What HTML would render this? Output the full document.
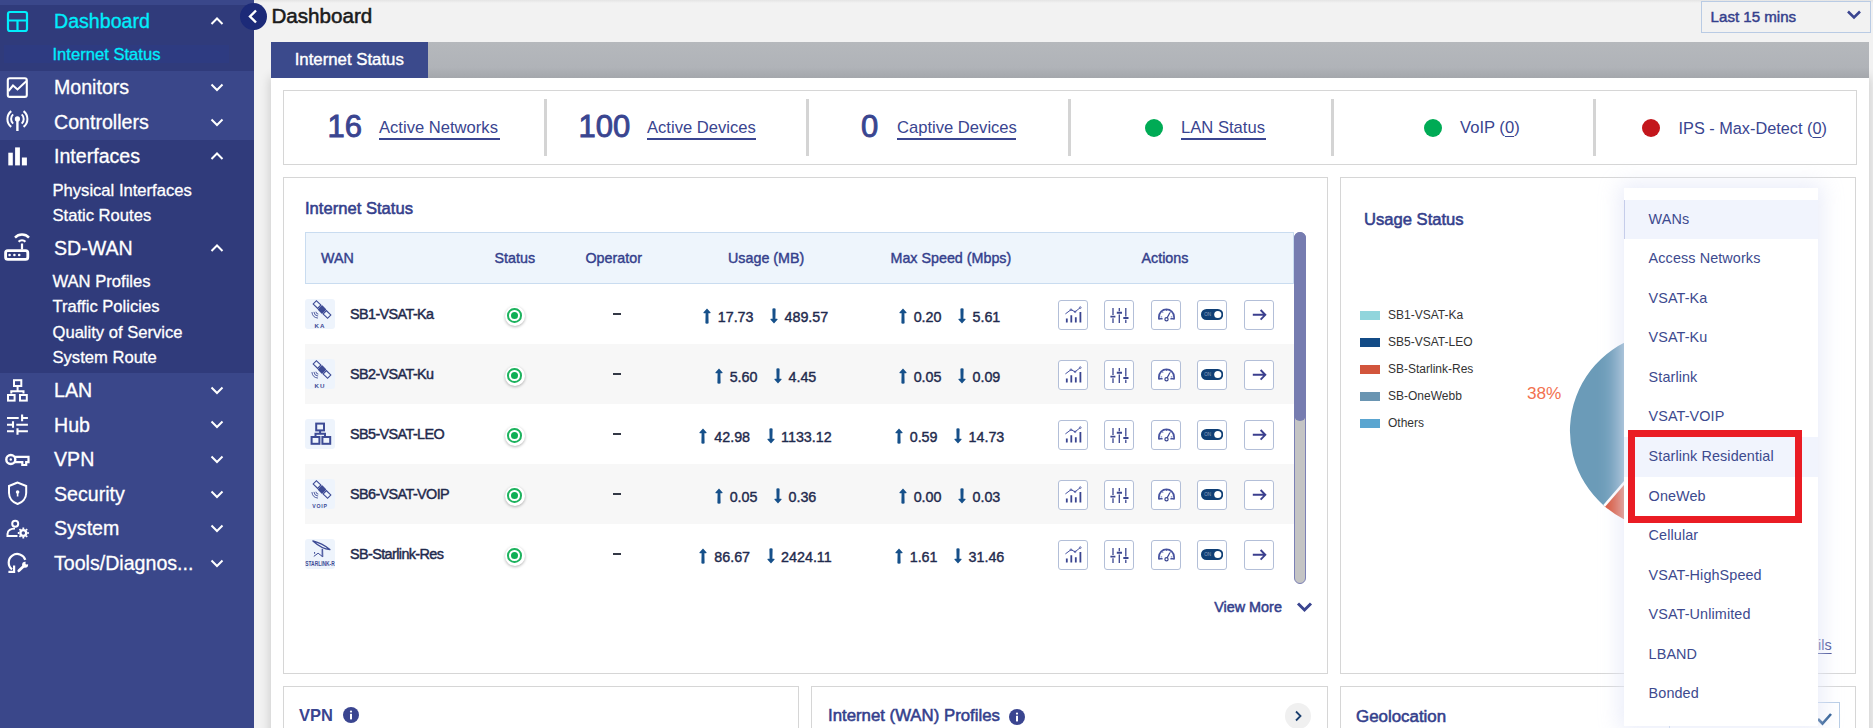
<!DOCTYPE html>
<html><head><meta charset="utf-8">
<style>
*{box-sizing:border-box;margin:0;padding:0}
html,body{width:1873px;height:728px;overflow:hidden;background:#f2f2f2;font-family:"Liberation Sans",sans-serif;position:relative}
.a{position:absolute}
.t{position:absolute;white-space:nowrap;line-height:1}
u{text-decoration-thickness:1px;text-underline-offset:3px}
</style></head><body>
<div class="a" style="left:0px;top:0px;width:254px;height:728px;background:#3a478a"></div>
<div class="a" style="left:0px;top:5px;width:254px;height:66px;background:#303b7b"></div>
<div class="a" style="left:4px;top:45px;width:225px;height:18px;background:#2e3b81"></div>
<div class="a" style="left:0px;top:140px;width:254px;height:233px;background:#303b7b"></div>
<div class="t" style="left:54.0px;top:12.41px;font-size:19.6px;color:#00eefc;font-weight:400;-webkit-text-stroke:0.3px #00eefc">Dashboard</div>
<svg class="a" style="left:210px;top:16.2px" width="14" height="10" viewBox="0 0 14 10"><path d="M1.5 8 L7 2.5 L12.5 8" fill="none" stroke="#fff" stroke-width="2"/></svg>
<div class="t" style="left:54.0px;top:78.21px;font-size:19.6px;color:#ffffff;font-weight:400;-webkit-text-stroke:0.3px #ffffff">Monitors</div>
<svg class="a" style="left:210px;top:82.0px" width="14" height="10" viewBox="0 0 14 10"><path d="M1.5 2.5 L7 8 L12.5 2.5" fill="none" stroke="#fff" stroke-width="2"/></svg>
<div class="t" style="left:54.0px;top:112.81px;font-size:19.6px;color:#ffffff;font-weight:400;-webkit-text-stroke:0.3px #ffffff">Controllers</div>
<svg class="a" style="left:210px;top:116.6px" width="14" height="10" viewBox="0 0 14 10"><path d="M1.5 2.5 L7 8 L12.5 2.5" fill="none" stroke="#fff" stroke-width="2"/></svg>
<div class="t" style="left:54.0px;top:147.41px;font-size:19.6px;color:#ffffff;font-weight:400;-webkit-text-stroke:0.3px #ffffff">Interfaces</div>
<svg class="a" style="left:210px;top:151.2px" width="14" height="10" viewBox="0 0 14 10"><path d="M1.5 8 L7 2.5 L12.5 8" fill="none" stroke="#fff" stroke-width="2"/></svg>
<div class="t" style="left:54.0px;top:239.21px;font-size:19.6px;color:#ffffff;font-weight:400;-webkit-text-stroke:0.3px #ffffff">SD-WAN</div>
<svg class="a" style="left:210px;top:243.0px" width="14" height="10" viewBox="0 0 14 10"><path d="M1.5 8 L7 2.5 L12.5 8" fill="none" stroke="#fff" stroke-width="2"/></svg>
<div class="t" style="left:54.0px;top:380.81px;font-size:19.6px;color:#ffffff;font-weight:400;-webkit-text-stroke:0.3px #ffffff">LAN</div>
<svg class="a" style="left:210px;top:384.6px" width="14" height="10" viewBox="0 0 14 10"><path d="M1.5 2.5 L7 8 L12.5 2.5" fill="none" stroke="#fff" stroke-width="2"/></svg>
<div class="t" style="left:54.0px;top:415.61px;font-size:19.6px;color:#ffffff;font-weight:400;-webkit-text-stroke:0.3px #ffffff">Hub</div>
<svg class="a" style="left:210px;top:419.4px" width="14" height="10" viewBox="0 0 14 10"><path d="M1.5 2.5 L7 8 L12.5 2.5" fill="none" stroke="#fff" stroke-width="2"/></svg>
<div class="t" style="left:54.0px;top:450.01px;font-size:19.6px;color:#ffffff;font-weight:400;-webkit-text-stroke:0.3px #ffffff">VPN</div>
<svg class="a" style="left:210px;top:453.8px" width="14" height="10" viewBox="0 0 14 10"><path d="M1.5 2.5 L7 8 L12.5 2.5" fill="none" stroke="#fff" stroke-width="2"/></svg>
<div class="t" style="left:54.0px;top:484.81px;font-size:19.6px;color:#ffffff;font-weight:400;-webkit-text-stroke:0.3px #ffffff">Security</div>
<svg class="a" style="left:210px;top:488.6px" width="14" height="10" viewBox="0 0 14 10"><path d="M1.5 2.5 L7 8 L12.5 2.5" fill="none" stroke="#fff" stroke-width="2"/></svg>
<div class="t" style="left:54.0px;top:519.01px;font-size:19.6px;color:#ffffff;font-weight:400;-webkit-text-stroke:0.3px #ffffff">System</div>
<svg class="a" style="left:210px;top:522.8px" width="14" height="10" viewBox="0 0 14 10"><path d="M1.5 2.5 L7 8 L12.5 2.5" fill="none" stroke="#fff" stroke-width="2"/></svg>
<div class="t" style="left:54.0px;top:553.71px;font-size:19.6px;color:#ffffff;font-weight:400;-webkit-text-stroke:0.3px #ffffff">Tools/Diagnos...</div>
<svg class="a" style="left:210px;top:557.5px" width="14" height="10" viewBox="0 0 14 10"><path d="M1.5 2.5 L7 8 L12.5 2.5" fill="none" stroke="#fff" stroke-width="2"/></svg>
<div class="t" style="left:52.5px;top:46.95px;font-size:16.6px;color:#00eefc;font-weight:400;-webkit-text-stroke:0.3px #00eefc">Internet Status</div>
<div class="t" style="left:52.5px;top:182.95px;font-size:16.6px;color:#ffffff;font-weight:400;-webkit-text-stroke:0.3px #ffffff">Physical Interfaces</div>
<div class="t" style="left:52.5px;top:208.05px;font-size:16.6px;color:#ffffff;font-weight:400;-webkit-text-stroke:0.3px #ffffff">Static Routes</div>
<div class="t" style="left:52.5px;top:273.55px;font-size:16.6px;color:#ffffff;font-weight:400;-webkit-text-stroke:0.3px #ffffff">WAN Profiles</div>
<div class="t" style="left:52.5px;top:298.75px;font-size:16.6px;color:#ffffff;font-weight:400;-webkit-text-stroke:0.3px #ffffff">Traffic Policies</div>
<div class="t" style="left:52.5px;top:324.75px;font-size:16.6px;color:#ffffff;font-weight:400;-webkit-text-stroke:0.3px #ffffff">Quality of Service</div>
<div class="t" style="left:52.5px;top:350.15px;font-size:16.6px;color:#ffffff;font-weight:400;-webkit-text-stroke:0.3px #ffffff">System Route</div>
<svg class="a" style="left:0;top:0" width="40" height="600" viewBox="0 0 40 600">
<rect x="8" y="12" width="19" height="19" rx="2" fill="none" stroke="#00eefc" stroke-width="2.2"/><path d="M8 20.5H27M17.5 20.5V31" stroke="#00eefc" stroke-width="2.2"/>
<rect x="7.8" y="78.2" width="19" height="18.7" rx="2" fill="none" stroke="#fff" stroke-width="2.1"/><path d="M8.5 91 L13 85.5 L17.5 89.5 L26.5 81" fill="none" stroke="#fff" stroke-width="2"/>
<circle cx="17.4" cy="118.9" r="2.6" fill="#fff"/><path d="M17.4 119 V131" stroke="#fff" stroke-width="2.4"/>
<path d="M13.10 114.39 A6.3 6.3 0 0 0 13.10 123.61 M21.70 114.39 A6.3 6.3 0 0 1 21.70 123.61 M11.24 111.12 A10 10 0 0 0 11.24 126.88 M23.56 111.12 A10 10 0 0 1 23.56 126.88" fill="none" stroke="#fff" stroke-width="2"/>
<rect x="8.3" y="152.7" width="4.5" height="12.7" fill="#fff"/><rect x="15.1" y="147.4" width="4.8" height="18" fill="#fff"/><rect x="21.9" y="157.5" width="5" height="7.9" fill="#fff"/>
<rect x="5.6" y="250.6" width="22.2" height="8.8" rx="2.2" fill="none" stroke="#fff" stroke-width="2.8"/>
<circle cx="9.6" cy="255" r="1.3" fill="#fff"/><circle cx="14.4" cy="255" r="1.3" fill="#fff"/><circle cx="19.2" cy="255" r="1.3" fill="#fff"/>
<path d="M22 243.5 V249.5" stroke="#fff" stroke-width="2.2"/>
<path d="M18.6 241.8 A4.5 4.5 0 0 1 25.4 241.8" fill="none" stroke="#fff" stroke-width="2.2"/>
<path d="M15 237.6 A9.5 9.5 0 0 1 29 237.6" fill="none" stroke="#fff" stroke-width="2.4"/>
<rect x="14" y="380.2" width="7.3" height="5.8" fill="none" stroke="#fff" stroke-width="2"/>
<path d="M17.6 386 V391.2 M11.3 393.5 V391.2 H23.5 V393.5" fill="none" stroke="#fff" stroke-width="2"/>
<rect x="8" y="395" width="6.6" height="5.6" fill="none" stroke="#fff" stroke-width="2"/><rect x="20" y="395" width="6.8" height="5.6" fill="none" stroke="#fff" stroke-width="2"/>
<path d="M7 418 H18.7 M22.1 418 H27.9 M7 424.7 H13 M16.3 424.7 H27.9 M7 431.3 H13.9 M17.5 431.3 H27.9" stroke="#fff" stroke-width="2"/>
<path d="M22.1 414.4 V421.2 M13 421.2 V427.8 M17.5 428.2 V434.8" stroke="#fff" stroke-width="2.1"/>
<circle cx="10.8" cy="459.5" r="4.5" fill="none" stroke="#fff" stroke-width="2.4"/><circle cx="10.8" cy="459.5" r="1.2" fill="#fff"/>
<path d="M15 456.8 H28.5 V462.2 H26.2 V465 H22.3 V462.2 H15" fill="none" stroke="#fff" stroke-width="2.2"/>
<path d="M17.6 482.5 L9 486 V493 C9 498.5 13 502.5 17.6 504 C22.2 502.5 26.2 498.5 26.2 493 V486 Z" fill="none" stroke="#fff" stroke-width="2"/>
<circle cx="17.6" cy="492" r="1.8" fill="#fff"/><path d="M17.6 492 V496.5" stroke="#fff" stroke-width="1.6"/>
<circle cx="15.2" cy="523.8" r="3" fill="none" stroke="#fff" stroke-width="2"/>
<path d="M17.5 536 H7.5 V534 C7.5 530.5 11 528.5 15 528.5" fill="none" stroke="#fff" stroke-width="2"/>
<circle cx="23.3" cy="533" r="2.9" fill="none" stroke="#fff" stroke-width="2.3"/>
<path d="M23.3 527.5 V529 M23.3 537 V538.5 M17.8 533 H19.3 M27.3 533 H28.8 M19.4 529.1 L20.5 530.2 M26.1 535.8 L27.2 536.9 M19.4 536.9 L20.5 535.8 M26.1 530.2 L27.2 529.1" stroke="#fff" stroke-width="1.8"/>
<path d="M25.3 559.9 A8.5 8.5 0 1 0 12.1 569.3" fill="none" stroke="#fff" stroke-width="2.2"/>
<path d="M14.1 565.6 V571.9 H8.4" fill="none" stroke="#fff" stroke-width="2.2"/>
<path d="M18.8 570.8 L23.6 566.2" stroke="#fff" stroke-width="2.8" stroke-linecap="round"/><circle cx="25.1" cy="564.8" r="3" fill="#fff"/><circle cx="26.9" cy="563" r="1.5" fill="#3a478a"/>
</svg>
<div class="a" style="left:254px;top:0px;width:1619px;height:3px;background:linear-gradient(#e4e4e4,#f2f2f2)"></div>
<div class="a" style="left:240px;top:3px;width:27px;height:27px;border-radius:50%;background:#1c2a78"></div>
<svg class="a" style="left:245px;top:8px" width="16" height="17" viewBox="0 0 16 17"><path d="M11 2.5 L5 8.5 L11 14.5" fill="none" stroke="#fff" stroke-width="2.4"/></svg>
<div class="t" style="left:271.5px;top:6.16px;font-size:20.6px;color:#1b1b1b;font-weight:400;-webkit-text-stroke:0.55px #1b1b1b">Dashboard</div>
<div class="a" style="left:1701px;top:1px;width:170px;height:32px;border:1px solid #b9cbe4;background:#f2f2f2"></div>
<div class="t" style="left:1710.6px;top:9.12px;font-size:15.1px;color:#34408c;font-weight:400;-webkit-text-stroke:0.45px #34408c">Last 15 mins</div>
<svg class="a" style="left:1846px;top:9px" width="16" height="12" viewBox="0 0 16 12"><path d="M2 2.5 L8 8.5 L14 2.5" fill="none" stroke="#3a4590" stroke-width="2.6"/></svg>
<div class="a" style="left:271px;top:78px;width:1598px;height:700px;box-shadow:0 0 10px 1px rgba(0,0,0,0.16)"></div>
<div class="a" style="left:271px;top:78px;width:1598px;height:650px;background:#fff"></div>
<div class="a" style="left:271px;top:42px;width:1598px;height:36px;background:linear-gradient(#b5b8bc 0%,#b0b3b8 70%,#a4a7ac 100%)"></div>
<div class="a" style="left:271px;top:42px;width:157px;height:36px;background:#3b4a8c"></div>
<div class="t" style="left:294.7px;top:51.78px;font-size:16.8px;color:#ffffff;font-weight:400;-webkit-text-stroke:0.4px #fff">Internet Status</div>
<div class="a" style="left:283px;top:90px;width:1574px;height:75px;border:1px solid #d6d6d6;background:#fff"></div>
<div class="a" style="left:544px;top:99px;width:3px;height:57px;background:#d4d4d4"></div>
<div class="a" style="left:806px;top:99px;width:3px;height:57px;background:#d4d4d4"></div>
<div class="a" style="left:1068px;top:99px;width:3px;height:57px;background:#d4d4d4"></div>
<div class="a" style="left:1331px;top:99px;width:3px;height:57px;background:#d4d4d4"></div>
<div class="a" style="left:1593px;top:99px;width:3px;height:57px;background:#d4d4d4"></div>
<div class="t" style="left:327.5px;top:110.56px;font-size:31px;color:#3a4590;font-weight:400;-webkit-text-stroke:0.9px #3a4590">16</div>
<div class="t" style="left:578.5px;top:110.56px;font-size:31px;color:#3a4590;font-weight:400;-webkit-text-stroke:0.9px #3a4590">100</div>
<div class="t" style="left:861.0px;top:110.56px;font-size:31px;color:#3a4590;font-weight:400;-webkit-text-stroke:0.9px #3a4590">0</div>
<div class="t" style="left:379.0px;top:119.65px;font-size:16.6px;color:#3a4590;font-weight:400;">Active Networks</div>
<div class="a" style="left:379px;top:138.2px;width:121px;height:2px;background:#3a4590"></div>
<div class="t" style="left:647.0px;top:119.65px;font-size:16.6px;color:#3a4590;font-weight:400;">Active Devices</div>
<div class="a" style="left:647px;top:138.2px;width:108.5px;height:2px;background:#3a4590"></div>
<div class="t" style="left:897.0px;top:119.65px;font-size:16.6px;color:#3a4590;font-weight:400;">Captive Devices</div>
<div class="a" style="left:897px;top:138.2px;width:118.5px;height:2px;background:#3a4590"></div>
<div class="t" style="left:1181.0px;top:119.65px;font-size:16.6px;color:#3a4590;font-weight:400;">LAN Status</div>
<div class="a" style="left:1181px;top:138.2px;width:84.5px;height:2px;background:#3a4590"></div>
<div class="a" style="left:1145px;top:119px;width:18px;height:18px;border-radius:50%;background:#00ab55"></div>
<div class="a" style="left:1424px;top:119px;width:18px;height:18px;border-radius:50%;background:#00ab55"></div>
<div class="a" style="left:1642px;top:119px;width:18px;height:18px;border-radius:50%;background:#c3161c"></div>
<div class="t" style="left:1460.0px;top:120.15px;font-size:16.6px;color:#3a4590;font-weight:400;">VoIP (<u>0</u>)</div>
<div class="t" style="left:1678.5px;top:120.40px;font-size:16.3px;color:#3a4590;font-weight:400;">IPS - Max-Detect (<u>0</u>)</div>
<div class="a" style="left:283px;top:177px;width:1045px;height:497px;border:1px solid #d6d6d6;background:#fff"></div>
<div class="t" style="left:305.0px;top:201.25px;font-size:16.6px;color:#34408c;font-weight:400;-webkit-text-stroke:0.55px #34408c">Internet Status</div>
<div class="a" style="left:305px;top:232px;width:989px;height:52px;background:#eef5fc;border:1px solid #c9dcf0"></div>
<div class="t" style="left:321.0px;top:251.30px;font-size:14.3px;color:#34408c;font-weight:400;-webkit-text-stroke:0.4px #34408c">WAN</div>
<div class="t" style="left:494.5px;top:251.30px;font-size:14.3px;color:#34408c;font-weight:400;-webkit-text-stroke:0.4px #34408c">Status</div>
<div class="t" style="left:585.5px;top:251.30px;font-size:14.3px;color:#34408c;font-weight:400;-webkit-text-stroke:0.4px #34408c">Operator</div>
<div class="t" style="left:728.0px;top:251.30px;font-size:14.3px;color:#34408c;font-weight:400;-webkit-text-stroke:0.4px #34408c">Usage (MB)</div>
<div class="t" style="left:890.5px;top:251.30px;font-size:14.3px;color:#34408c;font-weight:400;-webkit-text-stroke:0.4px #34408c">Max Speed (Mbps)</div>
<div class="t" style="left:1141.5px;top:251.30px;font-size:14.3px;color:#34408c;font-weight:400;-webkit-text-stroke:0.4px #34408c">Actions</div>
<div class="a" style="left:305px;top:299px;width:30px;height:30px;background:#eef4fc;border-radius:3px"></div>
<svg class="a" style="left:305px;top:299px" width="30" height="30" viewBox="0 0 30 30"><g transform="rotate(-45 17 10.5)"><rect x="13.8" y="7.3" width="6.4" height="6.4" rx="0.8" fill="#3d4b95"/><rect x="14.7" y="0.3" width="4.6" height="6.3" fill="none" stroke="#3d4b95" stroke-width="1.1"/><rect x="14.7" y="14.4" width="4.6" height="6.3" fill="none" stroke="#3d4b95" stroke-width="1.1"/></g>
<path d="M13.27 15.09 A2.6 2.6 0 0 1 10.91 12.73 M13.10 17.08 A4.6 4.6 0 0 1 8.92 12.90 M12.92 19.07 A6.6 6.6 0 0 1 6.93 13.08" fill="none" stroke="#3d4b95" stroke-width="0.9"/><text x="15" y="28.8" text-anchor="middle" font-family="Liberation Sans" font-weight="700" font-size="6.2" letter-spacing="1.0" fill="#3d4b95">KA</text></svg>
<div class="t" style="left:350.0px;top:307.01px;font-size:14.4px;color:#1f2a4d;font-weight:400;-webkit-text-stroke:0.45px #1f2a4d;letter-spacing:-0.6px">SB1-VSAT-Ka</div>
<div class="a" style="left:504.5px;top:305.5px;width:20px;height:20px;border-radius:50%;background:#fff;box-shadow:0 1px 3px rgba(0,0,0,0.30)"></div>
<div class="a" style="left:507.2px;top:308.2px;width:14.6px;height:14.6px;border-radius:50%;border:2.3px solid #1db35e"></div>
<div class="a" style="left:510.8px;top:311.8px;width:7.4px;height:7.4px;border-radius:50%;background:#0fae55"></div>
<div class="a" style="left:613px;top:313.2px;width:8.2px;height:1.4px;background:#333845"></div>
<div class="a" style="left:305px;top:344px;width:989px;height:60px;background:#f7f7f7"></div>
<div class="a" style="left:305px;top:359px;width:30px;height:30px;background:#eef4fc;border-radius:3px"></div>
<svg class="a" style="left:305px;top:359px" width="30" height="30" viewBox="0 0 30 30"><g transform="rotate(-45 17 10.5)"><rect x="13.8" y="7.3" width="6.4" height="6.4" rx="0.8" fill="#3d4b95"/><rect x="14.7" y="0.3" width="4.6" height="6.3" fill="none" stroke="#3d4b95" stroke-width="1.1"/><rect x="14.7" y="14.4" width="4.6" height="6.3" fill="none" stroke="#3d4b95" stroke-width="1.1"/></g>
<path d="M13.27 15.09 A2.6 2.6 0 0 1 10.91 12.73 M13.10 17.08 A4.6 4.6 0 0 1 8.92 12.90 M12.92 19.07 A6.6 6.6 0 0 1 6.93 13.08" fill="none" stroke="#3d4b95" stroke-width="0.9"/><text x="15" y="28.8" text-anchor="middle" font-family="Liberation Sans" font-weight="700" font-size="6.2" letter-spacing="1.0" fill="#3d4b95">KU</text></svg>
<div class="t" style="left:350.0px;top:367.01px;font-size:14.4px;color:#1f2a4d;font-weight:400;-webkit-text-stroke:0.45px #1f2a4d;letter-spacing:-0.6px">SB2-VSAT-Ku</div>
<div class="a" style="left:504.5px;top:365.5px;width:20px;height:20px;border-radius:50%;background:#fff;box-shadow:0 1px 3px rgba(0,0,0,0.30)"></div>
<div class="a" style="left:507.2px;top:368.2px;width:14.6px;height:14.6px;border-radius:50%;border:2.3px solid #1db35e"></div>
<div class="a" style="left:510.8px;top:371.8px;width:7.4px;height:7.4px;border-radius:50%;background:#0fae55"></div>
<div class="a" style="left:613px;top:373.2px;width:8.2px;height:1.4px;background:#333845"></div>
<div class="a" style="left:305px;top:419px;width:30px;height:30px;background:#eef4fc;border-radius:3px"></div>
<svg class="a" style="left:305px;top:419px" width="30" height="30" viewBox="0 0 30 30"><rect x="11.2" y="4.6" width="7.8" height="6.8" fill="none" stroke="#3d4b95" stroke-width="2"/><path d="M15.1 11.4 V14.8 M10.5 18 V14.8 H20 V18" fill="none" stroke="#3d4b95" stroke-width="2"/><rect x="6.6" y="18" width="7.8" height="6.8" fill="none" stroke="#3d4b95" stroke-width="2"/><rect x="17.4" y="18" width="7.8" height="6.8" fill="none" stroke="#3d4b95" stroke-width="2"/></svg>
<div class="t" style="left:350.0px;top:427.01px;font-size:14.4px;color:#1f2a4d;font-weight:400;-webkit-text-stroke:0.45px #1f2a4d;letter-spacing:-0.6px">SB5-VSAT-LEO</div>
<div class="a" style="left:504.5px;top:425.5px;width:20px;height:20px;border-radius:50%;background:#fff;box-shadow:0 1px 3px rgba(0,0,0,0.30)"></div>
<div class="a" style="left:507.2px;top:428.2px;width:14.6px;height:14.6px;border-radius:50%;border:2.3px solid #1db35e"></div>
<div class="a" style="left:510.8px;top:431.8px;width:7.4px;height:7.4px;border-radius:50%;background:#0fae55"></div>
<div class="a" style="left:613px;top:433.2px;width:8.2px;height:1.4px;background:#333845"></div>
<div class="a" style="left:305px;top:464px;width:989px;height:60px;background:#f7f7f7"></div>
<div class="a" style="left:305px;top:479px;width:30px;height:30px;background:#eef4fc;border-radius:3px"></div>
<svg class="a" style="left:305px;top:479px" width="30" height="30" viewBox="0 0 30 30"><g transform="rotate(-45 17 10.5)"><rect x="13.8" y="7.3" width="6.4" height="6.4" rx="0.8" fill="#3d4b95"/><rect x="14.7" y="0.3" width="4.6" height="6.3" fill="none" stroke="#3d4b95" stroke-width="1.1"/><rect x="14.7" y="14.4" width="4.6" height="6.3" fill="none" stroke="#3d4b95" stroke-width="1.1"/></g>
<path d="M13.27 15.09 A2.6 2.6 0 0 1 10.91 12.73 M13.10 17.08 A4.6 4.6 0 0 1 8.92 12.90 M12.92 19.07 A6.6 6.6 0 0 1 6.93 13.08" fill="none" stroke="#3d4b95" stroke-width="0.9"/><text x="15" y="28.8" text-anchor="middle" font-family="Liberation Sans" font-weight="700" font-size="5.2" letter-spacing="0.8" fill="#3d4b95">VOIP</text></svg>
<div class="t" style="left:350.0px;top:487.01px;font-size:14.4px;color:#1f2a4d;font-weight:400;-webkit-text-stroke:0.45px #1f2a4d;letter-spacing:-0.6px">SB6-VSAT-VOIP</div>
<div class="a" style="left:504.5px;top:485.5px;width:20px;height:20px;border-radius:50%;background:#fff;box-shadow:0 1px 3px rgba(0,0,0,0.30)"></div>
<div class="a" style="left:507.2px;top:488.2px;width:14.6px;height:14.6px;border-radius:50%;border:2.3px solid #1db35e"></div>
<div class="a" style="left:510.8px;top:491.8px;width:7.4px;height:7.4px;border-radius:50%;background:#0fae55"></div>
<div class="a" style="left:613px;top:493.2px;width:8.2px;height:1.4px;background:#333845"></div>
<div class="a" style="left:305px;top:539px;width:30px;height:30px;background:#eef4fc;border-radius:3px"></div>
<svg class="a" style="left:305px;top:539px" width="30" height="30" viewBox="0 0 30 30"><path d="M7.9 1.9 Q17 4.2 24.9 10.5 Q17 10 7.9 1.9 Z" fill="none" stroke="#3d4b95" stroke-width="1.3" stroke-linejoin="round"/><path d="M16.6 9.8 L17 17.6" stroke="#aab3da" stroke-width="1.6"/><path d="M17.6 9.9 L17.8 17.8 L13.1 14.2 L8.8 17.4 M9.6 13 V14.8" fill="none" stroke="#3d4b95" stroke-width="1"/><text x="0.2" y="26.8" font-family="Liberation Sans" font-weight="700" font-size="6.9" textLength="29.6" lengthAdjust="spacingAndGlyphs" fill="#3d4b95">STARLINK-R</text></svg>
<div class="t" style="left:350.0px;top:547.01px;font-size:14.4px;color:#1f2a4d;font-weight:400;-webkit-text-stroke:0.45px #1f2a4d;letter-spacing:-0.6px">SB-Starlink-Res</div>
<div class="a" style="left:504.5px;top:545.5px;width:20px;height:20px;border-radius:50%;background:#fff;box-shadow:0 1px 3px rgba(0,0,0,0.30)"></div>
<div class="a" style="left:507.2px;top:548.2px;width:14.6px;height:14.6px;border-radius:50%;border:2.3px solid #1db35e"></div>
<div class="a" style="left:510.8px;top:551.8px;width:7.4px;height:7.4px;border-radius:50%;background:#0fae55"></div>
<div class="a" style="left:613px;top:553.2px;width:8.2px;height:1.4px;background:#333845"></div>
<div class="a" style="left:615.5px;top:305.80px;width:300px;display:flex;justify-content:center;align-items:baseline;white-space:nowrap;line-height:1;font-size:14.3px;color:#1f2a4d;-webkit-text-stroke:0.4px #1f2a4d"><svg width="8" height="16" viewBox="0 0 8 16" style="margin-right:7px;position:relative;top:2.5px;flex:none"><path d="M4 0.4 L7.6 4.6 Q7.8 5.3 7 5.3 L5.4 5.3 L5.6 15 Q5.6 15.8 4 15.8 Q2.4 15.8 2.4 15 L2.6 5.3 L1 5.3 Q0.2 5.3 0.4 4.6 Z" fill="#16508a"/></svg><span style="margin-right:16.5px">17.73</span><svg width="8" height="16" viewBox="0 0 8 16" style="margin-right:6.5px;position:relative;top:2.5px;flex:none"><path d="M4 15.6 L7.6 11.4 Q7.8 10.7 7 10.7 L5.4 10.7 L5.6 1 Q5.6 0.2 4 0.2 Q2.4 0.2 2.4 1 L2.6 10.7 L1 10.7 Q0.2 10.7 0.4 11.4 Z" fill="#16508a"/></svg><span>489.57</span></div>
<div class="a" style="left:799.5px;top:305.80px;width:300px;display:flex;justify-content:center;align-items:baseline;white-space:nowrap;line-height:1;font-size:14.3px;color:#1f2a4d;-webkit-text-stroke:0.4px #1f2a4d"><svg width="8" height="16" viewBox="0 0 8 16" style="margin-right:7px;position:relative;top:2.5px;flex:none"><path d="M4 0.4 L7.6 4.6 Q7.8 5.3 7 5.3 L5.4 5.3 L5.6 15 Q5.6 15.8 4 15.8 Q2.4 15.8 2.4 15 L2.6 5.3 L1 5.3 Q0.2 5.3 0.4 4.6 Z" fill="#16508a"/></svg><span style="margin-right:16.5px">0.20</span><svg width="8" height="16" viewBox="0 0 8 16" style="margin-right:6.5px;position:relative;top:2.5px;flex:none"><path d="M4 15.6 L7.6 11.4 Q7.8 10.7 7 10.7 L5.4 10.7 L5.6 1 Q5.6 0.2 4 0.2 Q2.4 0.2 2.4 1 L2.6 10.7 L1 10.7 Q0.2 10.7 0.4 11.4 Z" fill="#16508a"/></svg><span>5.61</span></div>
<div class="a" style="left:1058px;top:300px;width:30px;height:30px;border:1.3px solid #b3bfd8;border-radius:3px;background:#fff"></div>
<svg class="a" style="left:1063.5px;top:305px" width="19" height="19" viewBox="0 0 19 19"><path d="M2.8 17.5 V13.4 M7.3 17.5 V10.2 M11.8 17.5 V12.3 M16.4 17.5 V7.1" stroke="#3a4590" stroke-width="1.8" fill="none"/><path d="M1.4 8.9 L7 4.7 L11.1 6.8 L16.3 2.6" stroke="#4753a0" stroke-width="1" fill="none"/><circle cx="7" cy="4.7" r="0.9" fill="none" stroke="#4753a0" stroke-width="0.7"/><circle cx="11.1" cy="6.8" r="0.9" fill="none" stroke="#4753a0" stroke-width="0.7"/><circle cx="16.3" cy="2.6" r="0.9" fill="none" stroke="#4753a0" stroke-width="0.7"/></svg>
<div class="a" style="left:1104px;top:300px;width:30px;height:30px;border:1.3px solid #b3bfd8;border-radius:3px;background:#fff"></div>
<svg class="a" style="left:1109.5px;top:305px" width="19" height="19" viewBox="0 0 19 19"><path d="M3 3 V9.9 M3 13.3 V17.9 M9.3 3 V6.2 M9.3 9.5 V17.9 M15.8 3 V11.4 M15.8 14.7 V17.9" stroke="#3a4590" stroke-width="1.3" fill="none"/><path d="M0.4 11.6 H5.4 M6.8 7.8 H12 M13.3 13 H18.5" stroke="#3a4590" stroke-width="1.9" fill="none"/></svg>
<div class="a" style="left:1151px;top:300px;width:30px;height:30px;border:1.3px solid #b3bfd8;border-radius:3px;background:#fff"></div>
<svg class="a" style="left:1156.5px;top:305px" width="19" height="19" viewBox="0 0 19 19"><path d="M1.9 14.4 V11.9 A7.6 7.6 0 0 1 17.1 11.9 V14.4" stroke="#4753a0" stroke-width="1.7" fill="none"/><path d="M1.9 13.7 H5.6 M13.4 13.7 H17.1" stroke="#4753a0" stroke-width="1.5"/><path d="M3.6 11.9 H5.2 M5.2 6.9 L6.2 7.9 M9.5 4.6 V6 M13.8 6.9 L12.8 7.9 M15.4 11.9 H13.8" stroke="#4753a0" stroke-width="0.8"/><circle cx="9.5" cy="14.3" r="1.6" stroke="#3a4590" stroke-width="1.2" fill="none"/><path d="M10.2 12.7 L12.8 7.8" stroke="#3a4590" stroke-width="1.2"/></svg>
<div class="a" style="left:1197px;top:300px;width:30px;height:30px;border:1.3px solid #b3bfd8;border-radius:3px;background:#fff"></div>
<svg class="a" style="left:1201px;top:305px" width="22" height="19" viewBox="0 0 22 19"><rect x="0" y="4" width="22.3" height="11" rx="5.5" fill="#0f3f75"/><circle cx="16.8" cy="9.5" r="3.6" fill="#fff"/><text x="3.2" y="11.3" font-size="4.6" fill="#8aa0c0" font-family="Liberation Sans">ON</text></svg>
<div class="a" style="left:1244px;top:300px;width:30px;height:30px;border:1.3px solid #b3bfd8;border-radius:3px;background:#fff"></div>
<svg class="a" style="left:1249.5px;top:305px" width="19" height="19" viewBox="0 0 19 19"><path d="M2.8 9.8 H15.2 M10.6 5 L15.3 9.8 L10.6 14.6" stroke="#3b3f8e" stroke-width="1.9" fill="none"/></svg>
<div class="a" style="left:615.5px;top:365.80px;width:300px;display:flex;justify-content:center;align-items:baseline;white-space:nowrap;line-height:1;font-size:14.3px;color:#1f2a4d;-webkit-text-stroke:0.4px #1f2a4d"><svg width="8" height="16" viewBox="0 0 8 16" style="margin-right:7px;position:relative;top:2.5px;flex:none"><path d="M4 0.4 L7.6 4.6 Q7.8 5.3 7 5.3 L5.4 5.3 L5.6 15 Q5.6 15.8 4 15.8 Q2.4 15.8 2.4 15 L2.6 5.3 L1 5.3 Q0.2 5.3 0.4 4.6 Z" fill="#16508a"/></svg><span style="margin-right:16.5px">5.60</span><svg width="8" height="16" viewBox="0 0 8 16" style="margin-right:6.5px;position:relative;top:2.5px;flex:none"><path d="M4 15.6 L7.6 11.4 Q7.8 10.7 7 10.7 L5.4 10.7 L5.6 1 Q5.6 0.2 4 0.2 Q2.4 0.2 2.4 1 L2.6 10.7 L1 10.7 Q0.2 10.7 0.4 11.4 Z" fill="#16508a"/></svg><span>4.45</span></div>
<div class="a" style="left:799.5px;top:365.80px;width:300px;display:flex;justify-content:center;align-items:baseline;white-space:nowrap;line-height:1;font-size:14.3px;color:#1f2a4d;-webkit-text-stroke:0.4px #1f2a4d"><svg width="8" height="16" viewBox="0 0 8 16" style="margin-right:7px;position:relative;top:2.5px;flex:none"><path d="M4 0.4 L7.6 4.6 Q7.8 5.3 7 5.3 L5.4 5.3 L5.6 15 Q5.6 15.8 4 15.8 Q2.4 15.8 2.4 15 L2.6 5.3 L1 5.3 Q0.2 5.3 0.4 4.6 Z" fill="#16508a"/></svg><span style="margin-right:16.5px">0.05</span><svg width="8" height="16" viewBox="0 0 8 16" style="margin-right:6.5px;position:relative;top:2.5px;flex:none"><path d="M4 15.6 L7.6 11.4 Q7.8 10.7 7 10.7 L5.4 10.7 L5.6 1 Q5.6 0.2 4 0.2 Q2.4 0.2 2.4 1 L2.6 10.7 L1 10.7 Q0.2 10.7 0.4 11.4 Z" fill="#16508a"/></svg><span>0.09</span></div>
<div class="a" style="left:1058px;top:360px;width:30px;height:30px;border:1.3px solid #b3bfd8;border-radius:3px;background:#fff"></div>
<svg class="a" style="left:1063.5px;top:365px" width="19" height="19" viewBox="0 0 19 19"><path d="M2.8 17.5 V13.4 M7.3 17.5 V10.2 M11.8 17.5 V12.3 M16.4 17.5 V7.1" stroke="#3a4590" stroke-width="1.8" fill="none"/><path d="M1.4 8.9 L7 4.7 L11.1 6.8 L16.3 2.6" stroke="#4753a0" stroke-width="1" fill="none"/><circle cx="7" cy="4.7" r="0.9" fill="none" stroke="#4753a0" stroke-width="0.7"/><circle cx="11.1" cy="6.8" r="0.9" fill="none" stroke="#4753a0" stroke-width="0.7"/><circle cx="16.3" cy="2.6" r="0.9" fill="none" stroke="#4753a0" stroke-width="0.7"/></svg>
<div class="a" style="left:1104px;top:360px;width:30px;height:30px;border:1.3px solid #b3bfd8;border-radius:3px;background:#fff"></div>
<svg class="a" style="left:1109.5px;top:365px" width="19" height="19" viewBox="0 0 19 19"><path d="M3 3 V9.9 M3 13.3 V17.9 M9.3 3 V6.2 M9.3 9.5 V17.9 M15.8 3 V11.4 M15.8 14.7 V17.9" stroke="#3a4590" stroke-width="1.3" fill="none"/><path d="M0.4 11.6 H5.4 M6.8 7.8 H12 M13.3 13 H18.5" stroke="#3a4590" stroke-width="1.9" fill="none"/></svg>
<div class="a" style="left:1151px;top:360px;width:30px;height:30px;border:1.3px solid #b3bfd8;border-radius:3px;background:#fff"></div>
<svg class="a" style="left:1156.5px;top:365px" width="19" height="19" viewBox="0 0 19 19"><path d="M1.9 14.4 V11.9 A7.6 7.6 0 0 1 17.1 11.9 V14.4" stroke="#4753a0" stroke-width="1.7" fill="none"/><path d="M1.9 13.7 H5.6 M13.4 13.7 H17.1" stroke="#4753a0" stroke-width="1.5"/><path d="M3.6 11.9 H5.2 M5.2 6.9 L6.2 7.9 M9.5 4.6 V6 M13.8 6.9 L12.8 7.9 M15.4 11.9 H13.8" stroke="#4753a0" stroke-width="0.8"/><circle cx="9.5" cy="14.3" r="1.6" stroke="#3a4590" stroke-width="1.2" fill="none"/><path d="M10.2 12.7 L12.8 7.8" stroke="#3a4590" stroke-width="1.2"/></svg>
<div class="a" style="left:1197px;top:360px;width:30px;height:30px;border:1.3px solid #b3bfd8;border-radius:3px;background:#fff"></div>
<svg class="a" style="left:1201px;top:365px" width="22" height="19" viewBox="0 0 22 19"><rect x="0" y="4" width="22.3" height="11" rx="5.5" fill="#0f3f75"/><circle cx="16.8" cy="9.5" r="3.6" fill="#fff"/><text x="3.2" y="11.3" font-size="4.6" fill="#8aa0c0" font-family="Liberation Sans">ON</text></svg>
<div class="a" style="left:1244px;top:360px;width:30px;height:30px;border:1.3px solid #b3bfd8;border-radius:3px;background:#fff"></div>
<svg class="a" style="left:1249.5px;top:365px" width="19" height="19" viewBox="0 0 19 19"><path d="M2.8 9.8 H15.2 M10.6 5 L15.3 9.8 L10.6 14.6" stroke="#3b3f8e" stroke-width="1.9" fill="none"/></svg>
<div class="a" style="left:615.5px;top:425.80px;width:300px;display:flex;justify-content:center;align-items:baseline;white-space:nowrap;line-height:1;font-size:14.3px;color:#1f2a4d;-webkit-text-stroke:0.4px #1f2a4d"><svg width="8" height="16" viewBox="0 0 8 16" style="margin-right:7px;position:relative;top:2.5px;flex:none"><path d="M4 0.4 L7.6 4.6 Q7.8 5.3 7 5.3 L5.4 5.3 L5.6 15 Q5.6 15.8 4 15.8 Q2.4 15.8 2.4 15 L2.6 5.3 L1 5.3 Q0.2 5.3 0.4 4.6 Z" fill="#16508a"/></svg><span style="margin-right:16.5px">42.98</span><svg width="8" height="16" viewBox="0 0 8 16" style="margin-right:6.5px;position:relative;top:2.5px;flex:none"><path d="M4 15.6 L7.6 11.4 Q7.8 10.7 7 10.7 L5.4 10.7 L5.6 1 Q5.6 0.2 4 0.2 Q2.4 0.2 2.4 1 L2.6 10.7 L1 10.7 Q0.2 10.7 0.4 11.4 Z" fill="#16508a"/></svg><span>1133.12</span></div>
<div class="a" style="left:799.5px;top:425.80px;width:300px;display:flex;justify-content:center;align-items:baseline;white-space:nowrap;line-height:1;font-size:14.3px;color:#1f2a4d;-webkit-text-stroke:0.4px #1f2a4d"><svg width="8" height="16" viewBox="0 0 8 16" style="margin-right:7px;position:relative;top:2.5px;flex:none"><path d="M4 0.4 L7.6 4.6 Q7.8 5.3 7 5.3 L5.4 5.3 L5.6 15 Q5.6 15.8 4 15.8 Q2.4 15.8 2.4 15 L2.6 5.3 L1 5.3 Q0.2 5.3 0.4 4.6 Z" fill="#16508a"/></svg><span style="margin-right:16.5px">0.59</span><svg width="8" height="16" viewBox="0 0 8 16" style="margin-right:6.5px;position:relative;top:2.5px;flex:none"><path d="M4 15.6 L7.6 11.4 Q7.8 10.7 7 10.7 L5.4 10.7 L5.6 1 Q5.6 0.2 4 0.2 Q2.4 0.2 2.4 1 L2.6 10.7 L1 10.7 Q0.2 10.7 0.4 11.4 Z" fill="#16508a"/></svg><span>14.73</span></div>
<div class="a" style="left:1058px;top:420px;width:30px;height:30px;border:1.3px solid #b3bfd8;border-radius:3px;background:#fff"></div>
<svg class="a" style="left:1063.5px;top:425px" width="19" height="19" viewBox="0 0 19 19"><path d="M2.8 17.5 V13.4 M7.3 17.5 V10.2 M11.8 17.5 V12.3 M16.4 17.5 V7.1" stroke="#3a4590" stroke-width="1.8" fill="none"/><path d="M1.4 8.9 L7 4.7 L11.1 6.8 L16.3 2.6" stroke="#4753a0" stroke-width="1" fill="none"/><circle cx="7" cy="4.7" r="0.9" fill="none" stroke="#4753a0" stroke-width="0.7"/><circle cx="11.1" cy="6.8" r="0.9" fill="none" stroke="#4753a0" stroke-width="0.7"/><circle cx="16.3" cy="2.6" r="0.9" fill="none" stroke="#4753a0" stroke-width="0.7"/></svg>
<div class="a" style="left:1104px;top:420px;width:30px;height:30px;border:1.3px solid #b3bfd8;border-radius:3px;background:#fff"></div>
<svg class="a" style="left:1109.5px;top:425px" width="19" height="19" viewBox="0 0 19 19"><path d="M3 3 V9.9 M3 13.3 V17.9 M9.3 3 V6.2 M9.3 9.5 V17.9 M15.8 3 V11.4 M15.8 14.7 V17.9" stroke="#3a4590" stroke-width="1.3" fill="none"/><path d="M0.4 11.6 H5.4 M6.8 7.8 H12 M13.3 13 H18.5" stroke="#3a4590" stroke-width="1.9" fill="none"/></svg>
<div class="a" style="left:1151px;top:420px;width:30px;height:30px;border:1.3px solid #b3bfd8;border-radius:3px;background:#fff"></div>
<svg class="a" style="left:1156.5px;top:425px" width="19" height="19" viewBox="0 0 19 19"><path d="M1.9 14.4 V11.9 A7.6 7.6 0 0 1 17.1 11.9 V14.4" stroke="#4753a0" stroke-width="1.7" fill="none"/><path d="M1.9 13.7 H5.6 M13.4 13.7 H17.1" stroke="#4753a0" stroke-width="1.5"/><path d="M3.6 11.9 H5.2 M5.2 6.9 L6.2 7.9 M9.5 4.6 V6 M13.8 6.9 L12.8 7.9 M15.4 11.9 H13.8" stroke="#4753a0" stroke-width="0.8"/><circle cx="9.5" cy="14.3" r="1.6" stroke="#3a4590" stroke-width="1.2" fill="none"/><path d="M10.2 12.7 L12.8 7.8" stroke="#3a4590" stroke-width="1.2"/></svg>
<div class="a" style="left:1197px;top:420px;width:30px;height:30px;border:1.3px solid #b3bfd8;border-radius:3px;background:#fff"></div>
<svg class="a" style="left:1201px;top:425px" width="22" height="19" viewBox="0 0 22 19"><rect x="0" y="4" width="22.3" height="11" rx="5.5" fill="#0f3f75"/><circle cx="16.8" cy="9.5" r="3.6" fill="#fff"/><text x="3.2" y="11.3" font-size="4.6" fill="#8aa0c0" font-family="Liberation Sans">ON</text></svg>
<div class="a" style="left:1244px;top:420px;width:30px;height:30px;border:1.3px solid #b3bfd8;border-radius:3px;background:#fff"></div>
<svg class="a" style="left:1249.5px;top:425px" width="19" height="19" viewBox="0 0 19 19"><path d="M2.8 9.8 H15.2 M10.6 5 L15.3 9.8 L10.6 14.6" stroke="#3b3f8e" stroke-width="1.9" fill="none"/></svg>
<div class="a" style="left:615.5px;top:485.80px;width:300px;display:flex;justify-content:center;align-items:baseline;white-space:nowrap;line-height:1;font-size:14.3px;color:#1f2a4d;-webkit-text-stroke:0.4px #1f2a4d"><svg width="8" height="16" viewBox="0 0 8 16" style="margin-right:7px;position:relative;top:2.5px;flex:none"><path d="M4 0.4 L7.6 4.6 Q7.8 5.3 7 5.3 L5.4 5.3 L5.6 15 Q5.6 15.8 4 15.8 Q2.4 15.8 2.4 15 L2.6 5.3 L1 5.3 Q0.2 5.3 0.4 4.6 Z" fill="#16508a"/></svg><span style="margin-right:16.5px">0.05</span><svg width="8" height="16" viewBox="0 0 8 16" style="margin-right:6.5px;position:relative;top:2.5px;flex:none"><path d="M4 15.6 L7.6 11.4 Q7.8 10.7 7 10.7 L5.4 10.7 L5.6 1 Q5.6 0.2 4 0.2 Q2.4 0.2 2.4 1 L2.6 10.7 L1 10.7 Q0.2 10.7 0.4 11.4 Z" fill="#16508a"/></svg><span>0.36</span></div>
<div class="a" style="left:799.5px;top:485.80px;width:300px;display:flex;justify-content:center;align-items:baseline;white-space:nowrap;line-height:1;font-size:14.3px;color:#1f2a4d;-webkit-text-stroke:0.4px #1f2a4d"><svg width="8" height="16" viewBox="0 0 8 16" style="margin-right:7px;position:relative;top:2.5px;flex:none"><path d="M4 0.4 L7.6 4.6 Q7.8 5.3 7 5.3 L5.4 5.3 L5.6 15 Q5.6 15.8 4 15.8 Q2.4 15.8 2.4 15 L2.6 5.3 L1 5.3 Q0.2 5.3 0.4 4.6 Z" fill="#16508a"/></svg><span style="margin-right:16.5px">0.00</span><svg width="8" height="16" viewBox="0 0 8 16" style="margin-right:6.5px;position:relative;top:2.5px;flex:none"><path d="M4 15.6 L7.6 11.4 Q7.8 10.7 7 10.7 L5.4 10.7 L5.6 1 Q5.6 0.2 4 0.2 Q2.4 0.2 2.4 1 L2.6 10.7 L1 10.7 Q0.2 10.7 0.4 11.4 Z" fill="#16508a"/></svg><span>0.03</span></div>
<div class="a" style="left:1058px;top:480px;width:30px;height:30px;border:1.3px solid #b3bfd8;border-radius:3px;background:#fff"></div>
<svg class="a" style="left:1063.5px;top:485px" width="19" height="19" viewBox="0 0 19 19"><path d="M2.8 17.5 V13.4 M7.3 17.5 V10.2 M11.8 17.5 V12.3 M16.4 17.5 V7.1" stroke="#3a4590" stroke-width="1.8" fill="none"/><path d="M1.4 8.9 L7 4.7 L11.1 6.8 L16.3 2.6" stroke="#4753a0" stroke-width="1" fill="none"/><circle cx="7" cy="4.7" r="0.9" fill="none" stroke="#4753a0" stroke-width="0.7"/><circle cx="11.1" cy="6.8" r="0.9" fill="none" stroke="#4753a0" stroke-width="0.7"/><circle cx="16.3" cy="2.6" r="0.9" fill="none" stroke="#4753a0" stroke-width="0.7"/></svg>
<div class="a" style="left:1104px;top:480px;width:30px;height:30px;border:1.3px solid #b3bfd8;border-radius:3px;background:#fff"></div>
<svg class="a" style="left:1109.5px;top:485px" width="19" height="19" viewBox="0 0 19 19"><path d="M3 3 V9.9 M3 13.3 V17.9 M9.3 3 V6.2 M9.3 9.5 V17.9 M15.8 3 V11.4 M15.8 14.7 V17.9" stroke="#3a4590" stroke-width="1.3" fill="none"/><path d="M0.4 11.6 H5.4 M6.8 7.8 H12 M13.3 13 H18.5" stroke="#3a4590" stroke-width="1.9" fill="none"/></svg>
<div class="a" style="left:1151px;top:480px;width:30px;height:30px;border:1.3px solid #b3bfd8;border-radius:3px;background:#fff"></div>
<svg class="a" style="left:1156.5px;top:485px" width="19" height="19" viewBox="0 0 19 19"><path d="M1.9 14.4 V11.9 A7.6 7.6 0 0 1 17.1 11.9 V14.4" stroke="#4753a0" stroke-width="1.7" fill="none"/><path d="M1.9 13.7 H5.6 M13.4 13.7 H17.1" stroke="#4753a0" stroke-width="1.5"/><path d="M3.6 11.9 H5.2 M5.2 6.9 L6.2 7.9 M9.5 4.6 V6 M13.8 6.9 L12.8 7.9 M15.4 11.9 H13.8" stroke="#4753a0" stroke-width="0.8"/><circle cx="9.5" cy="14.3" r="1.6" stroke="#3a4590" stroke-width="1.2" fill="none"/><path d="M10.2 12.7 L12.8 7.8" stroke="#3a4590" stroke-width="1.2"/></svg>
<div class="a" style="left:1197px;top:480px;width:30px;height:30px;border:1.3px solid #b3bfd8;border-radius:3px;background:#fff"></div>
<svg class="a" style="left:1201px;top:485px" width="22" height="19" viewBox="0 0 22 19"><rect x="0" y="4" width="22.3" height="11" rx="5.5" fill="#0f3f75"/><circle cx="16.8" cy="9.5" r="3.6" fill="#fff"/><text x="3.2" y="11.3" font-size="4.6" fill="#8aa0c0" font-family="Liberation Sans">ON</text></svg>
<div class="a" style="left:1244px;top:480px;width:30px;height:30px;border:1.3px solid #b3bfd8;border-radius:3px;background:#fff"></div>
<svg class="a" style="left:1249.5px;top:485px" width="19" height="19" viewBox="0 0 19 19"><path d="M2.8 9.8 H15.2 M10.6 5 L15.3 9.8 L10.6 14.6" stroke="#3b3f8e" stroke-width="1.9" fill="none"/></svg>
<div class="a" style="left:615.5px;top:545.80px;width:300px;display:flex;justify-content:center;align-items:baseline;white-space:nowrap;line-height:1;font-size:14.3px;color:#1f2a4d;-webkit-text-stroke:0.4px #1f2a4d"><svg width="8" height="16" viewBox="0 0 8 16" style="margin-right:7px;position:relative;top:2.5px;flex:none"><path d="M4 0.4 L7.6 4.6 Q7.8 5.3 7 5.3 L5.4 5.3 L5.6 15 Q5.6 15.8 4 15.8 Q2.4 15.8 2.4 15 L2.6 5.3 L1 5.3 Q0.2 5.3 0.4 4.6 Z" fill="#16508a"/></svg><span style="margin-right:16.5px">86.67</span><svg width="8" height="16" viewBox="0 0 8 16" style="margin-right:6.5px;position:relative;top:2.5px;flex:none"><path d="M4 15.6 L7.6 11.4 Q7.8 10.7 7 10.7 L5.4 10.7 L5.6 1 Q5.6 0.2 4 0.2 Q2.4 0.2 2.4 1 L2.6 10.7 L1 10.7 Q0.2 10.7 0.4 11.4 Z" fill="#16508a"/></svg><span>2424.11</span></div>
<div class="a" style="left:799.5px;top:545.80px;width:300px;display:flex;justify-content:center;align-items:baseline;white-space:nowrap;line-height:1;font-size:14.3px;color:#1f2a4d;-webkit-text-stroke:0.4px #1f2a4d"><svg width="8" height="16" viewBox="0 0 8 16" style="margin-right:7px;position:relative;top:2.5px;flex:none"><path d="M4 0.4 L7.6 4.6 Q7.8 5.3 7 5.3 L5.4 5.3 L5.6 15 Q5.6 15.8 4 15.8 Q2.4 15.8 2.4 15 L2.6 5.3 L1 5.3 Q0.2 5.3 0.4 4.6 Z" fill="#16508a"/></svg><span style="margin-right:16.5px">1.61</span><svg width="8" height="16" viewBox="0 0 8 16" style="margin-right:6.5px;position:relative;top:2.5px;flex:none"><path d="M4 15.6 L7.6 11.4 Q7.8 10.7 7 10.7 L5.4 10.7 L5.6 1 Q5.6 0.2 4 0.2 Q2.4 0.2 2.4 1 L2.6 10.7 L1 10.7 Q0.2 10.7 0.4 11.4 Z" fill="#16508a"/></svg><span>31.46</span></div>
<div class="a" style="left:1058px;top:540px;width:30px;height:30px;border:1.3px solid #b3bfd8;border-radius:3px;background:#fff"></div>
<svg class="a" style="left:1063.5px;top:545px" width="19" height="19" viewBox="0 0 19 19"><path d="M2.8 17.5 V13.4 M7.3 17.5 V10.2 M11.8 17.5 V12.3 M16.4 17.5 V7.1" stroke="#3a4590" stroke-width="1.8" fill="none"/><path d="M1.4 8.9 L7 4.7 L11.1 6.8 L16.3 2.6" stroke="#4753a0" stroke-width="1" fill="none"/><circle cx="7" cy="4.7" r="0.9" fill="none" stroke="#4753a0" stroke-width="0.7"/><circle cx="11.1" cy="6.8" r="0.9" fill="none" stroke="#4753a0" stroke-width="0.7"/><circle cx="16.3" cy="2.6" r="0.9" fill="none" stroke="#4753a0" stroke-width="0.7"/></svg>
<div class="a" style="left:1104px;top:540px;width:30px;height:30px;border:1.3px solid #b3bfd8;border-radius:3px;background:#fff"></div>
<svg class="a" style="left:1109.5px;top:545px" width="19" height="19" viewBox="0 0 19 19"><path d="M3 3 V9.9 M3 13.3 V17.9 M9.3 3 V6.2 M9.3 9.5 V17.9 M15.8 3 V11.4 M15.8 14.7 V17.9" stroke="#3a4590" stroke-width="1.3" fill="none"/><path d="M0.4 11.6 H5.4 M6.8 7.8 H12 M13.3 13 H18.5" stroke="#3a4590" stroke-width="1.9" fill="none"/></svg>
<div class="a" style="left:1151px;top:540px;width:30px;height:30px;border:1.3px solid #b3bfd8;border-radius:3px;background:#fff"></div>
<svg class="a" style="left:1156.5px;top:545px" width="19" height="19" viewBox="0 0 19 19"><path d="M1.9 14.4 V11.9 A7.6 7.6 0 0 1 17.1 11.9 V14.4" stroke="#4753a0" stroke-width="1.7" fill="none"/><path d="M1.9 13.7 H5.6 M13.4 13.7 H17.1" stroke="#4753a0" stroke-width="1.5"/><path d="M3.6 11.9 H5.2 M5.2 6.9 L6.2 7.9 M9.5 4.6 V6 M13.8 6.9 L12.8 7.9 M15.4 11.9 H13.8" stroke="#4753a0" stroke-width="0.8"/><circle cx="9.5" cy="14.3" r="1.6" stroke="#3a4590" stroke-width="1.2" fill="none"/><path d="M10.2 12.7 L12.8 7.8" stroke="#3a4590" stroke-width="1.2"/></svg>
<div class="a" style="left:1197px;top:540px;width:30px;height:30px;border:1.3px solid #b3bfd8;border-radius:3px;background:#fff"></div>
<svg class="a" style="left:1201px;top:545px" width="22" height="19" viewBox="0 0 22 19"><rect x="0" y="4" width="22.3" height="11" rx="5.5" fill="#0f3f75"/><circle cx="16.8" cy="9.5" r="3.6" fill="#fff"/><text x="3.2" y="11.3" font-size="4.6" fill="#8aa0c0" font-family="Liberation Sans">ON</text></svg>
<div class="a" style="left:1244px;top:540px;width:30px;height:30px;border:1.3px solid #b3bfd8;border-radius:3px;background:#fff"></div>
<svg class="a" style="left:1249.5px;top:545px" width="19" height="19" viewBox="0 0 19 19"><path d="M2.8 9.8 H15.2 M10.6 5 L15.3 9.8 L10.6 14.6" stroke="#3b3f8e" stroke-width="1.9" fill="none"/></svg>
<div class="a" style="left:1294px;top:232px;width:12px;height:352px;background:#c4c4c4;border:1px solid #7b80b5;border-radius:6px"></div>
<div class="a" style="left:1294px;top:232px;width:12px;height:189px;background:#767cb0;border-radius:6px 6px 6px 6px"></div>
<div class="t" style="left:1214.2px;top:599.81px;font-size:14.4px;color:#34408c;font-weight:400;-webkit-text-stroke:0.5px #34408c">View More</div>
<svg class="a" style="left:1296px;top:600px" width="17" height="14" viewBox="0 0 17 14"><path d="M2 3.5 L8.5 10 L15 3.5" fill="none" stroke="#3a4590" stroke-width="3"/></svg>
<div class="a" style="left:1340px;top:177px;width:516px;height:497px;border:1px solid #d6d6d6;background:#fff"></div>
<div class="t" style="left:1364.0px;top:211.95px;font-size:16.6px;color:#34408c;font-weight:400;-webkit-text-stroke:0.55px #34408c">Usage Status</div>
<div class="a" style="left:1360px;top:311px;width:20px;height:9px;background:#91d5dc"></div>
<div class="t" style="left:1388.0px;top:309.44px;font-size:12px;color:#333333;font-weight:400;">SB1-VSAT-Ka</div>
<div class="a" style="left:1360px;top:338px;width:20px;height:9px;background:#134b86"></div>
<div class="t" style="left:1388.0px;top:336.34px;font-size:12px;color:#333333;font-weight:400;">SB5-VSAT-LEO</div>
<div class="a" style="left:1360px;top:365px;width:20px;height:9px;background:#d2553c"></div>
<div class="t" style="left:1388.0px;top:363.24px;font-size:12px;color:#333333;font-weight:400;">SB-Starlink-Res</div>
<div class="a" style="left:1360px;top:392px;width:20px;height:9px;background:#6a95b2"></div>
<div class="t" style="left:1388.0px;top:390.14px;font-size:12px;color:#333333;font-weight:400;">SB-OneWebb</div>
<div class="a" style="left:1360px;top:419px;width:20px;height:9px;background:#5aa5d0"></div>
<div class="t" style="left:1388.0px;top:417.04px;font-size:12px;color:#333333;font-weight:400;">Others</div>
<div class="t" style="left:1527.0px;top:384.74px;font-size:17.2px;color:#f2714f;font-weight:400;">38%</div>
<svg class="a" style="left:1560px;top:320px" width="220" height="220" viewBox="1560 320 220 220"><path d="M1669 431 L1604.2 505.9 A99 99 0 0 1 1669 332 Z" fill="#6b9bb8"/><path d="M1669 431 L1604.2 505.9 A99 99 0 0 0 1682.8 529 Z" fill="#d9573d"/><path d="M1669 431 L1604.2 505.9" stroke="#fff" stroke-width="2.5"/></svg>
<div class="t" style="left:1818.0px;top:638.41px;font-size:14.4px;color:#3a4590;font-weight:400;"><u>ils</u></div>
<div class="a" style="left:283px;top:686px;width:516px;height:60px;border:1px solid #d6d6d6;background:#fff"></div>
<div class="a" style="left:811px;top:686px;width:517px;height:60px;border:1px solid #d6d6d6;background:#fff"></div>
<div class="a" style="left:1340px;top:686px;width:516px;height:60px;border:1px solid #d6d6d6;background:#fff"></div>
<div class="t" style="left:299.0px;top:706.83px;font-size:16.5px;color:#3a4590;font-weight:700;">VPN</div>
<div class="a" style="left:342.5px;top:706.5px;width:16px;height:16px;border-radius:50%;background:#3a4590"></div>
<svg class="a" style="left:342.5px;top:706.5px" width="16" height="16" viewBox="0 0 16 16"><circle cx="8" cy="4.6" r="1.1" fill="#fff"/><rect x="7" y="6.8" width="2" height="5.6" fill="#fff"/></svg>
<div class="t" style="left:828.0px;top:707.58px;font-size:16.8px;color:#34408c;font-weight:400;-webkit-text-stroke:0.55px #34408c">Internet (WAN) Profiles</div>
<div class="a" style="left:1009px;top:709px;width:16px;height:16px;border-radius:50%;background:#3a4590"></div>
<svg class="a" style="left:1009px;top:709px" width="16" height="16" viewBox="0 0 16 16"><circle cx="8" cy="4.6" r="1.1" fill="#fff"/><rect x="7" y="6.8" width="2" height="5.6" fill="#fff"/></svg>
<div class="a" style="left:1285px;top:702.5px;width:26px;height:26px;border-radius:50%;background:#f0f0f0"></div>
<svg class="a" style="left:1291px;top:708.5px" width="14" height="14" viewBox="0 0 14 14"><path d="M5 2.5 L9.5 7 L5 11.5" fill="none" stroke="#1b3f6e" stroke-width="1.8"/></svg>
<div class="t" style="left:1356.0px;top:709.29px;font-size:16.9px;color:#34408c;font-weight:400;-webkit-text-stroke:0.55px #34408c">Geolocation</div>
<div class="a" style="left:1669px;top:702px;width:171px;height:40px;border:1px solid #b8cde6;background:#fff"></div>
<svg class="a" style="left:1816px;top:711px" width="18" height="16" viewBox="0 0 18 16"><path d="M2 8 L6.5 12.5 L15 3" fill="none" stroke="#1b4f8a" stroke-width="2.6"/></svg>
<div class="a" style="left:1624px;top:188px;width:194px;height:538px;background:#fff;box-shadow:0 0 20px 4px rgba(228,231,247,0.8)"></div>
<div class="a" style="left:1624px;top:200px;width:194px;height:39px;background:#f1f4fd;border-left:1px solid #c6cdea"></div>
<div class="a" style="left:1624px;top:437px;width:194px;height:40px;background:#f1f4fd"></div>
<div class="t" style="left:1648.6px;top:211.51px;font-size:14.4px;color:#3d4a8e;font-weight:400;letter-spacing:0.1px">WANs</div>
<div class="t" style="left:1648.6px;top:251.08px;font-size:14.4px;color:#3d4a8e;font-weight:400;letter-spacing:0.1px">Access Networks</div>
<div class="t" style="left:1648.6px;top:290.65px;font-size:14.4px;color:#3d4a8e;font-weight:400;letter-spacing:0.1px">VSAT-Ka</div>
<div class="t" style="left:1648.6px;top:330.22px;font-size:14.4px;color:#3d4a8e;font-weight:400;letter-spacing:0.1px">VSAT-Ku</div>
<div class="t" style="left:1648.6px;top:369.79px;font-size:14.4px;color:#3d4a8e;font-weight:400;letter-spacing:0.1px">Starlink</div>
<div class="t" style="left:1648.6px;top:409.36px;font-size:14.4px;color:#3d4a8e;font-weight:400;letter-spacing:0.1px">VSAT-VOIP</div>
<div class="t" style="left:1648.6px;top:448.93px;font-size:14.4px;color:#3d4a8e;font-weight:400;letter-spacing:0.1px">Starlink Residential</div>
<div class="t" style="left:1648.6px;top:488.50px;font-size:14.4px;color:#3d4a8e;font-weight:400;letter-spacing:0.1px">OneWeb</div>
<div class="t" style="left:1648.6px;top:528.07px;font-size:14.4px;color:#3d4a8e;font-weight:400;letter-spacing:0.1px">Cellular</div>
<div class="t" style="left:1648.6px;top:567.64px;font-size:14.4px;color:#3d4a8e;font-weight:400;letter-spacing:0.1px">VSAT-HighSpeed</div>
<div class="t" style="left:1648.6px;top:607.21px;font-size:14.4px;color:#3d4a8e;font-weight:400;letter-spacing:0.1px">VSAT-Unlimited</div>
<div class="t" style="left:1648.6px;top:646.78px;font-size:14.4px;color:#3d4a8e;font-weight:400;letter-spacing:0.1px">LBAND</div>
<div class="t" style="left:1648.6px;top:686.35px;font-size:14.4px;color:#3d4a8e;font-weight:400;letter-spacing:0.1px">Bonded</div>
<div class="a" style="left:1628px;top:430px;width:174px;height:93px;border:7px solid #ea1c24"></div>
</body></html>
